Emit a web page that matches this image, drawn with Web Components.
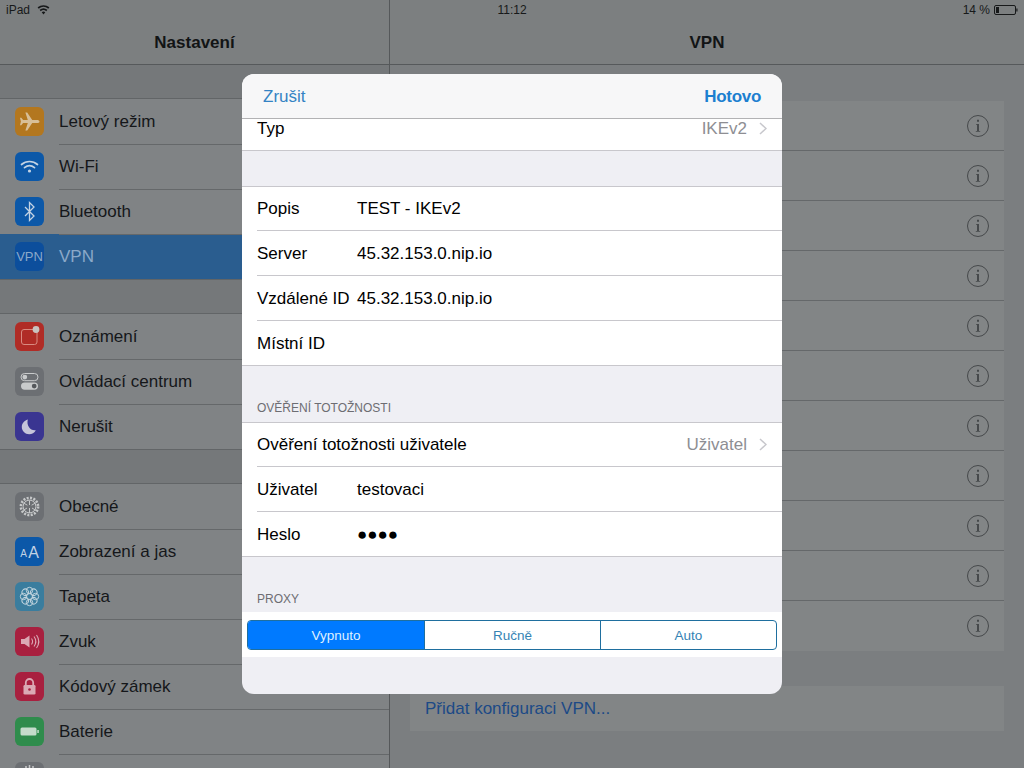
<!DOCTYPE html>
<html lang="cs">
<head>
<meta charset="utf-8">
<title>VPN</title>
<style>
  html, body { margin: 0; height: 100%; overflow: hidden; }
  body { font-family: "Liberation Sans", Arial, sans-serif; font-size: 17px; background: #7b7e80; }
</style>
</head>
<body>
<settings-app>
  <settings-sidebar slot="sidebar">
    <settings-group>
      <settings-row icon="plane" label="Letový režim"></settings-row>
      <settings-row icon="wifi" label="Wi-Fi"></settings-row>
      <settings-row icon="bluetooth" label="Bluetooth"></settings-row>
      <settings-row icon="vpn" label="VPN" active></settings-row>
    </settings-group>
    <settings-group>
      <settings-row icon="notify" label="Oznámení"></settings-row>
      <settings-row icon="control" label="Ovládací centrum"></settings-row>
      <settings-row icon="moon" label="Nerušit"></settings-row>
    </settings-group>
    <settings-group>
      <settings-row icon="gear" label="Obecné"></settings-row>
      <settings-row icon="display" label="Zobrazení a jas"></settings-row>
      <settings-row icon="flower" label="Tapeta"></settings-row>
      <settings-row icon="sound" label="Zvuk"></settings-row>
      <settings-row icon="lock" label="Kódový zámek"></settings-row>
      <settings-row icon="battery" label="Baterie"></settings-row>
      <settings-row icon="privacy" label=""></settings-row>
    </settings-group>
  </settings-sidebar>

  <vpn-panel slot="detail"></vpn-panel>

  <modal-sheet slot="modal">
    <form-row slot="top" label="Typ" detail="IKEv2" clipped></form-row>
    <form-group>
      <form-row label="Popis" value="TEST - IKEv2"></form-row>
      <form-row label="Server" value="45.32.153.0.nip.io"></form-row>
      <form-row label="Vzdálené ID" value="45.32.153.0.nip.io"></form-row>
      <form-row label="Místní ID" value=""></form-row>
    </form-group>
    <form-group heading="Ověření totožnosti">
      <form-row label="Ověření totožnosti uživatele" detail="Uživatel"></form-row>
      <form-row label="Uživatel" value="testovaci"></form-row>
      <form-row label="Heslo" value="●●●●" secret></form-row>
    </form-group>
    <form-group heading="Proxy" flat>
      <segmented-control options="Vypnuto,Ručně,Auto"></segmented-control>
    </form-group>
  </modal-sheet>
</settings-app>

<script>
/* one shadow root per element, markup set from the class */
function shadow(host, html) {
  host.attachShadow({ mode: 'open' }).innerHTML = html;
}

const petals = [0, 45, 90, 135, 180, 225, 270, 315]
  .map(a => `<circle cx="14.5" cy="8.5" r="3.2" transform="rotate(${a} 14.5 14.5)"/>`).join('');

const ICONS = {
  plane: ['#b3771f', `<path fill="#d8bf98" d="M24.5 14.5c0-1-1.100-1.600-2.600-1.600h-4.700L12.200 5.500h-1.800l2.400 7.400H8.100L6.300 10.800H5l.9 3.700-.9 3.700h1.300l1.800-2.100h4.700l-2.400 7.400h1.800l5-7.400h4.700c1.500 0 2.600-.6 2.600-1.600z"/>`],
  wifi: ['#0c58a8', `<g fill="none" stroke="#c3d3e4" stroke-width="1.700" stroke-linecap="round"><path d="M6.500 12.500c4.600-4 11.400-4 16 0"/><path d="M9.500 15.600c3-2.500 7-2.500 10 0"/></g><circle cx="14.5" cy="19" r="1.600" fill="#c3d3e4"/>`],
  bluetooth: ['#0c58a8', `<path fill="none" stroke="#c3d3e4" stroke-width="1.300" d="M10 10l9 9-4.500 4.500v-18L19 10l-9 9"/>`],
  vpn: ['#0c4e9c', `<text x="14.5" y="19" text-anchor="middle" font-size="13" fill="#8ba9c9">VPN</text>`],
  notify: ['#b02c26', `<rect x="6.500" y="7.500" width="15.500" height="15" rx="2.500" fill="none" stroke="#d98a80" stroke-width="1"/><circle cx="21" cy="7.500" r="3.400" fill="#c9c3c0"/>`],
  control: ['#6c6f73', `<rect x="6" y="6.500" width="17" height="7.200" rx="3.600" fill="none" stroke="#c9cbcc"/><circle cx="9.800" cy="10.100" r="2.400" fill="#c9cbcc"/><rect x="6" y="15.400" width="17" height="7.400" rx="3.700" fill="#c9cbcc"/><circle cx="19.200" cy="19.100" r="2.400" fill="#55585c"/>`],
  moon: ['#3a3591', `<path fill="#c6c5da" d="M12.800 7.500c-3.800 1-6 4.200-6 7.500 0 4 3.300 7.200 7.400 7.200 2.800 0 5.300-1.500 6.600-4-5 1-9.600-4.300-8-10.700z"/>`],
  gear: ['#6c6f73', `<g fill="none" stroke="#c6c8c9"><circle cx="14.5" cy="14.5" r="8.600" stroke-width="2.600" stroke-dasharray="2 1.400"/><circle cx="14.5" cy="14.5" r="6.400" stroke-width="1"/><path stroke-width="1" d="M14.500 8.500v4.500M14.500 16v5M12 16l-4 2.500M17 16l4 2.500M12.400 13.200 8.500 11M16.600 13.200l3.900-2.200"/></g>`],
  display: ['#0c58a8', `<text x="8.600" y="19.500" text-anchor="middle" font-size="10" fill="#c3d3e4">A</text><text x="18.500" y="21" text-anchor="middle" font-size="16" fill="#c3d3e4">A</text>`],
  flower: ['#3a7d9e', `<g fill="none" stroke="#c0d4de" stroke-width="1">${petals}<circle cx="14.5" cy="14.5" r="3"/></g>`],
  sound: ['#a8203f', `<path fill="#dba9b4" d="M6 12h3.500l5-3.500v12L9.500 17H6z"/><g fill="none" stroke="#dba9b4" stroke-width="1.100"><path d="M16.500 11.500c1.300 1.800 1.300 4.200 0 6"/><path d="M19 9.500c2.200 3 2.200 7 0 10"/><path d="M21.500 8c2.900 4.100 2.900 8.900 0 13"/></g>`],
  lock: ['#a8203f', `<path fill="none" stroke="#dba9b4" stroke-width="1.800" d="M10.800 13V10.700a3.700 3.700 0 0 1 7.400 0V13"/><rect x="8.500" y="13" width="12" height="9.500" rx="1.300" fill="#dba9b4"/><circle cx="14.500" cy="17.500" r="1.300" fill="#a8203f"/>`],
  battery: ['#2f8c4c', `<rect x="5.500" y="10.500" width="16" height="8" rx="1.500" fill="#c5dccb"/><rect x="22.300" y="13" width="1.500" height="3" fill="#c5dccb"/>`],
  privacy: ['#6c6f73', `<path fill="none" stroke="#c6c8c9" stroke-width="1.500" d="M11 4v6M14.500 3v7M18 4v6"/>`]
};

class SettingsApp extends HTMLElement {
  constructor() {
    super();
    shadow(this, `
      <style>
        :host { display: block; position: relative; width: 1024px; height: 768px; overflow: hidden; }
        .panes { display: grid; grid-template-columns: 389px 1fr; column-gap: 1px; height: 100%; background: #55585a; }
      </style>
      <div class="panes">
        <slot name="sidebar"></slot>
        <slot name="detail"></slot>
      </div>
      <status-bar></status-bar>
      <slot name="modal"></slot>`);
  }
}

class StatusBar extends HTMLElement {
  constructor() {
    super();
    shadow(this, `
      <style>
        :host { display: grid; grid-template-columns: 1fr auto 1fr; align-items: center; position: absolute; top: 0; left: 0; right: 0; height: 20px; padding: 0 6px; font-size: 12px; color: #17191a; }
        .left { display: flex; align-items: center; gap: 7px; }
        .right { display: flex; align-items: center; justify-content: flex-end; gap: 4px; }
        svg { display: block; }
      </style>
      <div class="left">iPad
        <svg width="13" height="10" viewBox="0 0 13 10"><path fill="#17191a" d="M6.500 9.500 4.700 7.300a2.900 2.900 0 0 1 3.600 0zM3.700 6.200 2.600 4.800a6.300 6.300 0 0 1 7.800 0L9.300 6.200a4.500 4.500 0 0 0-5.600 0zM1.700 3.700.6 2.300a9.500 9.500 0 0 1 11.800 0l-1.100 1.400a7.700 7.700 0 0 0-9.600 0z"/></svg>
      </div>
      <div>11:12</div>
      <div class="right">14 %
        <svg width="24" height="10" viewBox="0 0 24 10"><rect x=".5" y=".5" width="21" height="9" rx="1.500" fill="none" stroke="#17191a"/><rect x="2" y="2" width="3" height="6" fill="#17191a"/><rect x="22.300" y="3.500" width="1.200" height="3" fill="#17191a"/></svg>
      </div>`);
  }
}

class NavBar extends HTMLElement {
  constructor() {
    super();
    shadow(this, `
      <style>
        :host { display: flex; justify-content: center; align-items: center; box-sizing: border-box; height: 65px; padding-top: 21px; background: #7c7f80; border-bottom: 1px solid #56595b; font-weight: bold; color: #121415; }
      </style>
      <slot></slot>`);
  }
}

class SettingsSidebar extends HTMLElement {
  constructor() {
    super();
    shadow(this, `
      <style>
        :host { display: block; height: 768px; overflow: hidden; background: #75787a; }
        .list { display: flex; flex-direction: column; gap: 35px; padding-top: 34px; }
      </style>
      <nav-bar>Nastavení</nav-bar>
      <div class="list"><slot></slot></div>`);
  }
}

class SettingsGroup extends HTMLElement {
  constructor() {
    super();
    shadow(this, `
      <style>
        :host { display: block; background: #808385; box-shadow: 0 -1px 0 #626567, 0 1px 0 #626567; }
      </style>
      <slot></slot>`);
  }
}

class SettingsRow extends HTMLElement {
  constructor() {
    super();
    const [color, art] = ICONS[this.getAttribute('icon')];
    shadow(this, `
      <style>
        :host { display: flex; align-items: center; height: 45px; padding-left: 15px; gap: 15px; color: #15171a; }
        :host([active]) { background: #2a5d8f; color: #8ba9c9; }
        :host(:not(:last-child):not([active])) .text { box-shadow: 0 1px 0 #65686a; }
        .badge { flex: none; width: 29px; height: 29px; border-radius: 6px; background: ${color}; }
        svg { display: block; }
        .text { flex: 1; align-self: stretch; display: flex; align-items: center; }
      </style>
      <div class="badge"><svg width="29" height="29" viewBox="0 0 29 29">${art}</svg></div>
      <div class="text">${this.getAttribute('label')}</div>`);
  }
}

class VpnRow extends HTMLElement {
  constructor() {
    super();
    shadow(this, `
      <style>
        :host { display: flex; align-items: center; justify-content: flex-end; box-sizing: border-box; height: 50px; padding-right: 14px; border-bottom: 1px solid #65686a; }
        :host(:last-child) { border-bottom: 0; }
        svg { display: block; }
      </style>
      <svg width="24" height="24" viewBox="0 0 24 24">
        <circle cx="12" cy="12" r="10.500" fill="none" stroke="#46494b"/>
        <path fill="#46494b" d="M11 5.800h2v2h-2zM10 10h3v7h1.200v.8H9.800V17H11v-6.200h-1z"/>
      </svg>`);
  }
}

class VpnPanel extends HTMLElement {
  constructor() {
    super();
    const rows = '<vpn-row></vpn-row>'.repeat(11);
    shadow(this, `
      <style>
        :host { display: block; height: 768px; background: #7b7e80; }
        .body { display: flex; flex-direction: column; gap: 35px; padding: 36px 20px 0; }
        .card { background: #828586; }
        .add { display: flex; align-items: center; height: 45px; padding-left: 15px; color: #1c4a86; }
      </style>
      <nav-bar>VPN</nav-bar>
      <div class="body">
        <div class="card">${rows}</div>
        <div class="card add">Přidat konfiguraci VPN...</div>
      </div>`);
  }
}

class ModalSheet extends HTMLElement {
  constructor() {
    super();
    shadow(this, `
      <style>
        :host { display: block; position: absolute; left: 242px; top: 74px; width: 540px; height: 620px; border-radius: 12px; overflow: hidden; background: #efeff4; }
        header { display: flex; justify-content: space-between; align-items: center; box-sizing: border-box; height: 45px; padding: 1px 21px 0; background: #f7f7f8; border-bottom: 1px solid #b2b2b4; color: #3483c4; }
        b { color: #1c7fd0; letter-spacing: -.3px; }
        .top { display: block; background: #fff; border-bottom: 1px solid #c8c7cc; }
      </style>
      <header><span>Zrušit</span><b>Hotovo</b></header>
      <div class="top"><slot name="top"></slot></div>
      <slot></slot>`);
  }
}

class FormGroup extends HTMLElement {
  constructor() {
    super();
    const heading = this.getAttribute('heading');
    shadow(this, `
      <style>
        :host { display: block; }
        .head { display: flex; align-items: flex-end; box-sizing: border-box; height: 35px; padding: 0 0 7px 15px; font-size: 12px; text-transform: uppercase; color: #6d6d72; }
        :host([heading]) .head { height: 56px; }
        :host([flat]) .head { height: 55px; padding-bottom: 6px; }
        .rows { background: #fff; border-top: 1px solid #c8c7cc; }
        :host([flat]) .rows { border: 0; }
      </style>
      <div class="head">${heading || ''}</div>
      <div class="rows"><slot></slot></div>`);
  }
}

class FormRow extends HTMLElement {
  constructor() {
    super();
    const detail = this.getAttribute('detail');
    const value = this.getAttribute('value');
    shadow(this, `
      <style>
        :host { display: block; padding-left: 15px; color: #000; }
        :host(:last-child) { padding-left: 0; }
        :host(:last-child) .line { padding-left: 15px; }
        .line { display: flex; align-items: center; box-sizing: border-box; height: 45px; padding: 2px 15px 0 0; border-bottom: 1px solid #c8c7cc; }
        :host(:first-child) .line { height: 44px; padding-top: 0; }
        :host([clipped]) { padding-left: 15px; }
        :host([clipped]) .line { height: 31px; padding: 0 15px 12px 0; border: 0; }
        .label { flex: none; min-width: 100px; white-space: nowrap; }
        .value { flex: 1; }
        .detail { margin-left: auto; color: #8e8e93; }
        svg { display: block; margin-left: 12px; }
      </style>
      <div class="line">
        <span class="label">${this.getAttribute('label')}</span>
        ${detail ? `<span class="detail">${detail}</span>
          <svg width="8" height="13" viewBox="0 0 8 13"><path fill="none" stroke="#c7c7cc" stroke-width="1.500" d="M1 1l6 5.500L1 12"/></svg>`
          : `<span class="value">${value}</span>`}
      </div>`);
  }
}

class SegmentedControl extends HTMLElement {
  constructor() {
    super();
    const items = this.getAttribute('options').split(',')
      .map((o, i) => `<div class="seg${i === 0 ? ' on' : ''}">${o}</div>`).join('');
    shadow(this, `
      <style>
        :host { display: block; padding: 8px 5px 7px; background: #fff; }
        .bar { display: grid; grid-template-columns: repeat(3, 1fr); height: 30px; box-sizing: border-box; border: 1px solid #1f6f9f; border-radius: 4px; overflow: hidden; font-size: 13.500px; color: #3483b4; }
        .seg { display: flex; align-items: center; justify-content: center; border-left: 1px solid #1f6f9f; }
        .seg:first-child { border-left: 0; }
        .on { background: #007aff; color: #dff0ff; }
      </style>
      <div class="bar">${items}</div>`);
  }
}

customElements.define('nav-bar', NavBar);
customElements.define('status-bar', StatusBar);
customElements.define('settings-app', SettingsApp);
customElements.define('settings-sidebar', SettingsSidebar);
customElements.define('settings-group', SettingsGroup);
customElements.define('settings-row', SettingsRow);
customElements.define('vpn-row', VpnRow);
customElements.define('vpn-panel', VpnPanel);
customElements.define('modal-sheet', ModalSheet);
customElements.define('form-group', FormGroup);
customElements.define('form-row', FormRow);
customElements.define('segmented-control', SegmentedControl);
</script>
</body>
</html>
